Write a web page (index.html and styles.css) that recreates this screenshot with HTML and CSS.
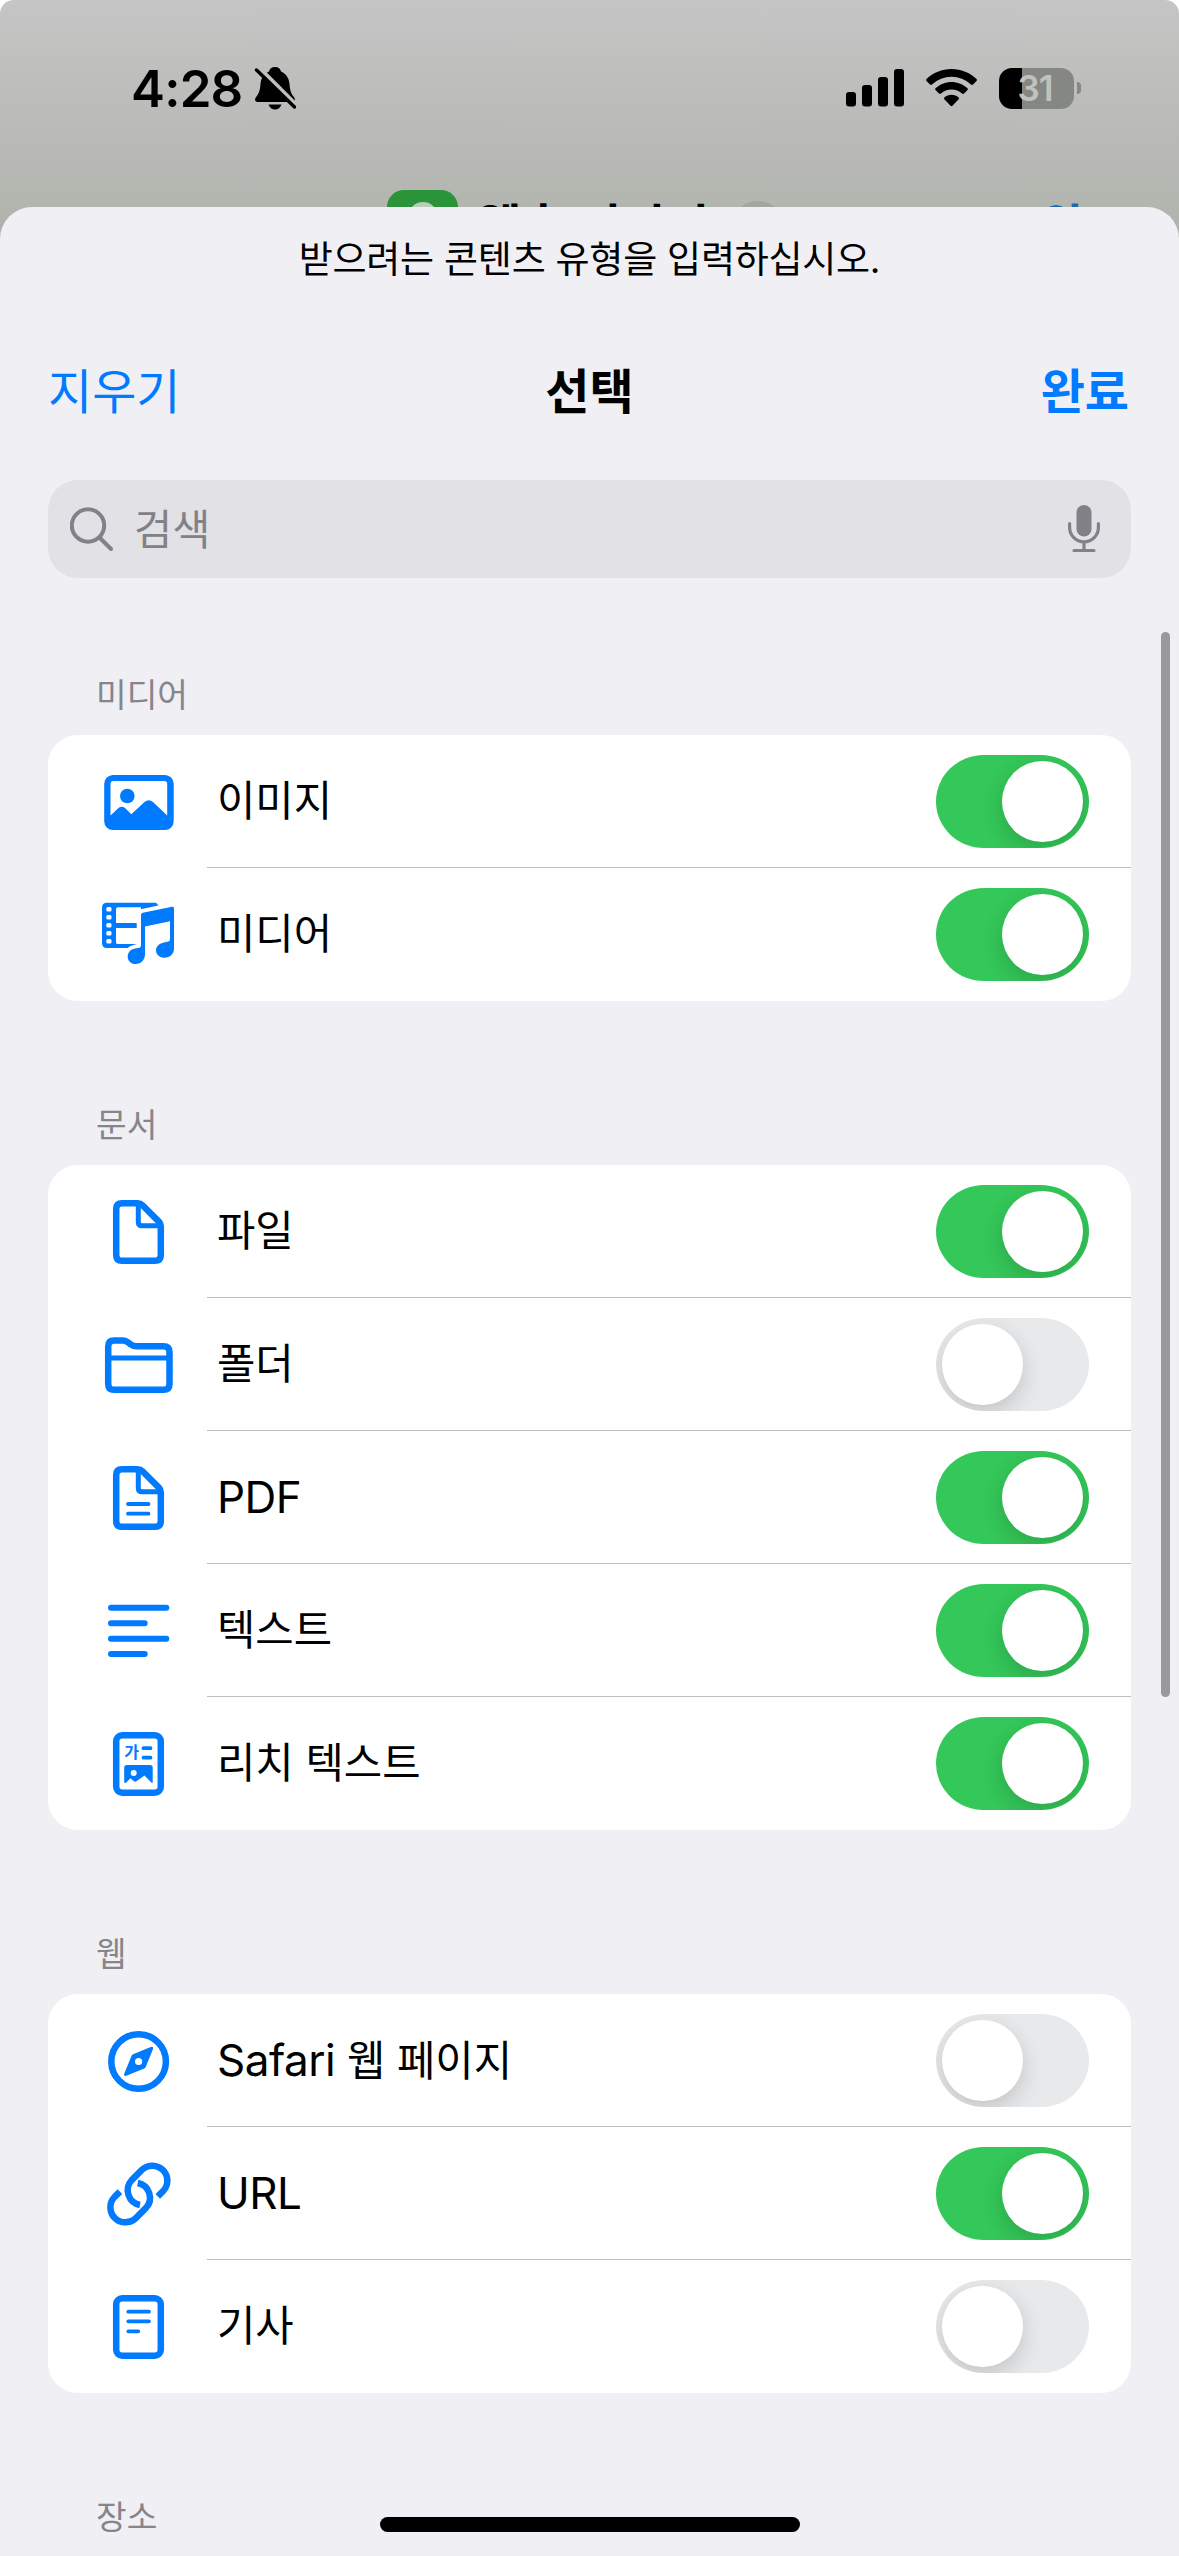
FILE: index.html
```html
<!DOCTYPE html>
<html lang="ko">
<head>
  <meta charset="UTF-8" />
  <meta name="viewport" content="width=device-width, initial-scale=1.0"/>
  <title>선택</title>
  <link rel="stylesheet" href="styles.css">
</head>
<body>
  <div class="screen">
    <div class="status-bar">
      <span class="time">4:28</span>
      <svg class="bell" width="42" height="44" viewBox="0 0 42 44">
        <path d="M21 1C17.500 1 15.500 3 15 5.500C9.500 8 7 12.500 6.500 18C6 25 4.500 28 2.500 30.500C0 33.500 1 36 4 36H38C41 36 42 33.500 39.500 30.500C37.500 28 36 25 35.500 18C35 12.500 32.500 8 27 5.500C26.500 3 24.500 1 21 1Z"/>
        <path d="M14.500 38.500H27.500C26.500 41.500 24 43.500 21 43.500S15.500 41.500 14.500 38.500Z"/>
        <path class="bell-gap" d="M-1 -1.500L42 41.500"/>
        <path class="bell-slash" d="M2.500 4L40.500 41"/>
      </svg>
      <div class="status-right">
        <svg width="58" height="38" viewBox="0 0 58 38">
          <rect x="0" y="23" width="10" height="14.500" rx="3"/>
          <rect x="16" y="16" width="10" height="21.500" rx="3"/>
          <rect x="32" y="8" width="10" height="29.500" rx="3"/>
          <rect x="48" y="0" width="10" height="37.500" rx="3"/>
        </svg>
        <svg width="51" height="38" viewBox="0 0 51 38">
          <path d="M25.500 0C35 0 44 3.700 50.500 10Q51.300 11 50.500 12L47 15.500Q46 16.300 45 15.500A28.500 28.500 0 0 0 6 15.500Q5 16.300 4 15.500L.5 12Q-.3 11 .5 10C7 3.700 16 0 25.500 0Z"/>
          <path d="M25.500 13C31.500 13 37.300 15.300 41.500 19.300Q42.300 20.200 41.500 21.100L38 24.600Q37 25.400 36 24.600A15.500 15.500 0 0 0 15 24.600Q14 25.400 13 24.600L9.500 21.100Q8.700 20.200 9.500 19.300C13.700 15.300 19.500 13 25.500 13Z"/>
          <path d="M25.500 25.700C28.200 25.700 30.700 26.700 32.600 28.400Q33.400 29.300 32.600 30.200L26.500 36.800Q25.500 37.600 24.500 36.800L18.400 30.200Q17.600 29.300 18.400 28.400C20.300 26.700 22.800 25.700 25.500 25.700Z"/>
        </svg>
        <div class="battery">
          <div class="battery-body">31</div>
          <div class="battery-nub"></div>
        </div>
      </div>
    </div>

    <!-- editor header, mostly hidden by the sheet -->
    <div class="backdrop-nav">
      <div class="app-icon"><div class="app-glyph"></div></div>
      <span class="backdrop-title">웹훅 서머리</span>
      <div class="backdrop-menu"></div>
      <span class="backdrop-done">완료</span>
    </div>

    <div class="sheet">
      <p class="prompt">받으려는 콘텐츠 유형을 입력하십시오.</p>

      <div class="navbar">
        <span class="nav-clear">지우기</span>
        <span class="nav-title">선택</span>
        <span class="nav-done">완료</span>
      </div>

      <div class="search">
        <svg width="44" height="46" viewBox="0 0 44 46">
          <circle cx="18" cy="19.500" r="16.200"/>
          <path d="M29.500 31.500L41 43"/>
        </svg>
        <span class="search-text">검색</span>
        <svg class="mic" width="32" height="48" viewBox="0 0 32 48">
          <rect class="mic-body" x="8.500" y="0" width="15" height="31.500" rx="7.500"/>
          <path d="M1.600 18.500V22.500A14.400 14.400 0 0 0 30.400 22.500V18.500M16 37V45M6 45.500H26"/>
        </svg>
      </div>

      <h2>미디어</h2>
      <div class="card">
        <div class="row">
          <svg class="icon" viewBox="0 0 80 81">
            <path class="fill" fill-rule="evenodd" d="M14 14H66A8.800 8.800 0 0 1 74.700 22.800V60.200A8.800 8.800 0 0 1 66 69H14A8.800 8.800 0 0 1 5.200 60.200V22.800A8.800 8.800 0 0 1 14 14ZM14.500 20Q11.500 20 11.500 23V54.500L19.500 47Q22.700 44.500 26 47L32.300 53.300L45.500 41Q49.700 37.500 54 41L68.200 54.500V23Q68.200 20 65.200 20Z"/>
            <circle class="fill" cx="28.300" cy="35" r="7.300"/>
          </svg>
          <div class="cell"><span class="label">이미지</span><div class="toggle on"></div></div>
        </div>
        <div class="row">
          <svg class="icon" viewBox="0 0 80 81">
            <path class="fill" fill-rule="evenodd" d="M8 8.700H57L60 12L42 16V13.300H19Q17 13.300 17 15V29H37.700V34H17V48.500Q17 50 19 50H38L31 54H8Q3 54 3 49V13.700Q3 8.700 8 8.700Z"/>
            <g class="holes">
              <rect x="7.300" y="13" width="5.200" height="4.600" rx="1.500"/>
              <rect x="7.300" y="21" width="5.200" height="4.600" rx="1.500"/>
              <rect x="7.300" y="29" width="5.200" height="4.600" rx="1.500"/>
              <rect x="7.300" y="37" width="5.200" height="4.600" rx="1.500"/>
              <rect x="7.300" y="45" width="5.200" height="4.600" rx="1.500"/>
            </g>
            <path class="note-gap" d="M42 21Q42 19.300 43.800 18.800L73 12.700Q75 12.300 75 14.500V54.500C75 60 71 63.700 65.500 63.700C60.500 63.700 57 60.500 57 56.500C57 52 60.500 49.300 65 48.400L69.500 47.500Q71 47 71 45V27.300L46 32.500V60C46 66 42 70 36.500 70C32 70 28.700 66.700 28.700 62.700C28.700 58.500 31.500 55.500 36 54.600L40.500 53.700Q42 53 42 51Z"/>
            <path class="fill" d="M42 21Q42 19.300 43.800 18.800L73 12.700Q75 12.300 75 14.500V54.500C75 60 71 63.700 65.500 63.700C60.500 63.700 57 60.500 57 56.500C57 52 60.500 49.300 65 48.400L69.500 47.500Q71 47 71 45V27.300L46 32.500V60C46 66 42 70 36.500 70C32 70 28.700 66.700 28.700 62.700C28.700 58.500 31.500 55.500 36 54.600L40.500 53.700Q42 53 42 51Z"/>
          </svg>
          <div class="cell"><span class="label">미디어</span><div class="toggle on"></div></div>
        </div>
      </div>

      <h2>문서</h2>
      <div class="card">
        <div class="row">
          <svg class="icon" viewBox="0 0 80 81">
            <path class="line" d="M23 12.200H38.500Q41.500 12.200 43.500 14.200L59.900 30.600Q61.800 32.500 61.800 35.300V64Q61.800 69.800 56 69.800H23Q17.200 69.800 17.200 64V18Q17.200 12.200 23 12.200Z"/>
            <path class="thin" d="M39.300 13V31Q39.300 34.800 43.100 34.800H61"/>
          </svg>
          <div class="cell"><span class="label">파일</span><div class="toggle on"></div></div>
        </div>
        <div class="row">
          <svg class="icon" viewBox="0 0 80 81">
            <path class="line" d="M9.200 60V22.500Q9.200 16.500 15 16.500H23.500Q26.500 16.500 29 18.300L31.500 20.300Q34 22.300 37.500 22.300H64.500Q70.500 22.300 70.500 28.200V60Q70.500 65.800 64.500 65.800H15Q9.200 65.800 9.200 60Z"/>
            <path class="thin" d="M10 34H70"/>
          </svg>
          <div class="cell"><span class="label">폴더</span><div class="toggle"></div></div>
        </div>
        <div class="row">
          <svg class="icon" viewBox="0 0 80 81">
            <path class="line" d="M23 12.200H38.500Q41.500 12.200 43.500 14.200L59.900 30.600Q61.800 32.500 61.800 35.300V64Q61.800 69.800 56 69.800H23Q17.200 69.800 17.200 64V18Q17.200 12.200 23 12.200Z"/>
            <path class="thin" d="M39.300 13V31Q39.300 34.800 43.100 34.800H61"/>
            <path class="hair" d="M29 47H49.500M29 56.700H49.500"/>
          </svg>
          <div class="cell"><span class="label latin">PDF</span><div class="toggle on"></div></div>
        </div>
        <div class="row">
          <svg class="icon" viewBox="0 0 80 81">
            <path class="bars" d="M12 17.700H67.300M12 33.300H45.700M12 48.700H67.300M12 64H45.700"/>
          </svg>
          <div class="cell"><span class="label">텍스트</span><div class="toggle on"></div></div>
        </div>
        <div class="row">
          <svg class="icon" viewBox="0 0 80 81">
            <rect class="line" x="17.200" y="12.200" width="44.600" height="57.600" rx="6"/>
            <text class="glyph" x="25.300" y="35.300">가</text>
            <path class="hair" d="M44.500 25.200H51.500M44.500 34.700H51.500"/>
            <path class="fill" fill-rule="evenodd" d="M28 42H51Q53.700 42 53.700 44.700V59.700H52.500L45.500 52.500L37 58.500Q35.500 59 34 57.500L31.500 55.300L27 59.700H25.200V44.700Q25.200 42 28 42ZM34.700 47A3 3 0 1 0 34.700 53A3 3 0 1 0 34.700 47Z"/>
          </svg>
          <div class="cell"><span class="label">리치 텍스트</span><div class="toggle on"></div></div>
        </div>
      </div>

      <h2>웹</h2>
      <div class="card">
        <div class="row">
          <svg class="icon" viewBox="0 0 80 81">
            <circle class="line" cx="39.600" cy="41.500" r="27.300"/>
            <path class="fill" fill-rule="evenodd" d="M34 34.300L51.800 27Q54.800 26.300 54 29L46.700 47Q46.200 48 45.200 48.600L27.300 55.800Q24.500 56.500 25.200 53.700L32.600 35.800Q33 34.800 34 34.300ZM39.600 37.900A3.600 3.600 0 1 0 39.600 45.100A3.600 3.600 0 1 0 39.600 37.900Z"/>
          </svg>
          <div class="cell"><span class="label"><span class="latin">Safari</span> 웹 페이지</span><div class="toggle"></div></div>
        </div>
        <div class="row">
          <svg class="icon" viewBox="0 0 80 81">
            <path class="link" d="M58.800 43.400L64.300 37.900A15 15 0 0 0 43.100 16.700L32.700 27.100A15 15 0 0 0 41 52"/>
            <path class="link" d="M20.900 38.600L15.400 44.100A15 15 0 0 0 36.600 65.300L47 54.900A15 15 0 0 0 38.700 30"/>
          </svg>
          <div class="cell"><span class="label latin">URL</span><div class="toggle on"></div></div>
        </div>
        <div class="row">
          <svg class="icon" viewBox="0 0 80 81">
            <rect class="line" x="17.200" y="12.200" width="44.600" height="57.600" rx="6"/>
            <path class="hair" d="M29.300 25.700H50M29.300 35.300H50M29.300 45.300H39.300"/>
          </svg>
          <div class="cell"><span class="label">기사</span><div class="toggle"></div></div>
        </div>
      </div>

      <h2>장소</h2>
    </div>

    <div class="scrollbar"></div>
    <div class="home-indicator"></div>
  </div>
</body>
</html>
```
FILE: styles.css
```css
body {
  margin: 0;
  background: #fff;
  font-family: Inter, 'Noto Sans CJK KR', sans-serif;
  color: #000;
}

.screen {
  position: relative;
  width: 1179px;
  height: 2556px;
  overflow: hidden;
  border-radius: 14px 14px 0 0;
  background: linear-gradient(#c5c5c5 0, #b3b5af 207px, #a9aaa8 280px);
  display: flex;
  flex-direction: column;
}

/* status bar */
.status-bar {
  height: 176px;
  box-sizing: border-box;
  padding: 0 98px 0 131px;
  display: flex;
  align-items: center;
}

.time {
  font-size: 51px;
  font-weight: 600;
  letter-spacing: -0.800px;
  width: 123px;
}

.bell-gap {
  stroke: #bfc0bd;
  stroke-width: 4;
  transform: translate(3px, 0);
}

.bell-slash {
  stroke: #000;
  stroke-width: 3.400;
  stroke-linecap: round;
}

.status-right {
  margin-left: auto;
  display: flex;
  align-items: center;
  gap: 22px;
}

.battery {
  display: flex;
  align-items: center;
  gap: 3px;
}

.battery-body {
  width: 75px;
  height: 41px;
  box-sizing: border-box;
  padding-right: 3px;
  border-radius: 13px;
  background: linear-gradient(90deg, #000 23px, #858783 23px);
  color: #c0c2be;
  font-size: 35px;
  font-weight: 600;
  line-height: 41px;
  text-align: center;
  letter-spacing: -1px;
}

.battery-nub {
  width: 4px;
  height: 12px;
  border-radius: 0 6px 6px 0;
  background: #858783;
}

/* header behind the sheet */
.backdrop-nav {
  height: 31px;
  padding: 14px 50px 0 387px;
  box-sizing: border-box;
  overflow: hidden;
  display: flex;
  align-items: flex-start;
}

.app-icon {
  width: 71px;
  height: 71px;
  flex: none;
  border-radius: 17px;
  background: #2b933a;
  display: flex;
  justify-content: center;
}

.app-glyph {
  width: 30px;
  height: 30px;
  margin-top: 12px;
  border-radius: 50%;
  background: #b9cdb9;
}

.backdrop-title,
.backdrop-done {
  margin-top: 1px;
  font-size: 48px;
  font-weight: 700;
  line-height: 72px;
}

.backdrop-title {
  width: 229px;
  margin-left: 19px;
  white-space: nowrap;
}

.backdrop-menu {
  width: 54px;
  height: 54px;
  margin: 11px 0 0 25px;
  border-radius: 50%;
  background: #a3a5a1;
}

.backdrop-done {
  margin-left: auto;
  color: #1b69b2;
}

/* sheet */
.sheet {
  position: relative;
  flex: 1;
  min-height: 0;
  overflow: hidden;
  padding: 0 48px;
  border-radius: 32px 32px 0 0;
  background: #f0eff4;
}

.prompt {
  margin: 26px 0 0;
  font-size: 37px;
  line-height: 54px;
  letter-spacing: -0.250px;
  text-align: center;
  white-space: nowrap;
}

.navbar {
  margin-top: 69px;
  height: 72px;
  display: grid;
  grid-template-columns: 1fr auto 1fr;
  align-items: center;
  font-size: 48px;
  line-height: 72px;
}

.nav-clear {
  color: #007aff;
}

.nav-title {
  font-weight: 700;
}

.nav-done {
  padding-right: 2px;
  color: #007aff;
  font-weight: 700;
  text-align: right;
}

.search {
  margin-top: 52px;
  height: 98px;
  box-sizing: border-box;
  padding: 0 31px 0 22px;
  border-radius: 30px;
  background: #e2e1e6;
  display: flex;
  align-items: center;
  color: #828187;
}

.search svg {
  fill: none;
  stroke: #828187;
  stroke-width: 4;
  stroke-linecap: round;
}

.search .mic {
  margin-left: auto;
  stroke-width: 3.200;
}

.search .mic-body {
  fill: #828187;
  stroke: none;
}

.search-text {
  margin-left: 20px;
  padding-bottom: 5px;
  font-size: 41.500px;
}

h2 {
  margin: 88px 0 0 48px;
  height: 76px;
  font-size: 33.300px;
  font-weight: 400;
  line-height: 73px;
  color: #86858b;
}

.search + h2 {
  margin-top: 81px;
}

.card {
  border-radius: 30px;
  background: #fff;
  overflow: hidden;
}

.row {
  height: 133px;
  padding-left: 51px;
  display: flex;
  align-items: center;
}

.cell {
  flex: 1;
  height: 133px;
  margin-left: 28px;
  padding: 0 42px 0 10px;
  box-sizing: border-box;
  border-bottom: 1px solid #bfbfc3;
  display: flex;
  align-items: center;
  justify-content: space-between;
}

.row:last-child .cell {
  border-bottom-color: transparent;
}

.label {
  font-size: 41.700px;
  line-height: 60px;
}

.latin {
  font-size: 44px;
  letter-spacing: -0.500px;
}

/* icons */
.icon {
  width: 80px;
  height: 81px;
  flex: none;
}

.fill {
  fill: #007aff;
}

.holes {
  fill: #fff;
}

.note-gap {
  fill: #fff;
  stroke: #fff;
  stroke-width: 8;
}

.line,
.thin,
.hair,
.bars,
.link {
  fill: none;
  stroke: #007aff;
  stroke-width: 6.500;
}

.thin {
  stroke-width: 5;
}

.hair {
  stroke-width: 3.800;
  stroke-linecap: round;
}

.bars {
  stroke-width: 6;
  stroke-linecap: round;
}

.glyph {
  fill: #007aff;
  font-size: 16px;
  font-weight: 700;
}

/* toggle */
.toggle {
  width: 153px;
  height: 93px;
  box-sizing: border-box;
  padding: 6px;
  border-radius: 48px / 46.500px;
  background: #e8e9eb;
  overflow: hidden;
  display: flex;
}

.toggle::after {
  content: '';
  width: 81px;
  height: 81px;
  border-radius: 50%;
  background: #fff;
  box-shadow: 0 8px 22px rgba(0, 0, 0, 0.16);
}

.toggle.on {
  background: #34c759;
  justify-content: flex-end;
}

.scrollbar {
  position: absolute;
  top: 632px;
  right: 9px;
  width: 9px;
  height: 1065px;
  border-radius: 5px;
  background: #99989d;
}

.home-indicator {
  position: absolute;
  left: 380px;
  bottom: 24px;
  width: 420px;
  height: 15px;
  border-radius: 8px;
  background: #000;
}
```
